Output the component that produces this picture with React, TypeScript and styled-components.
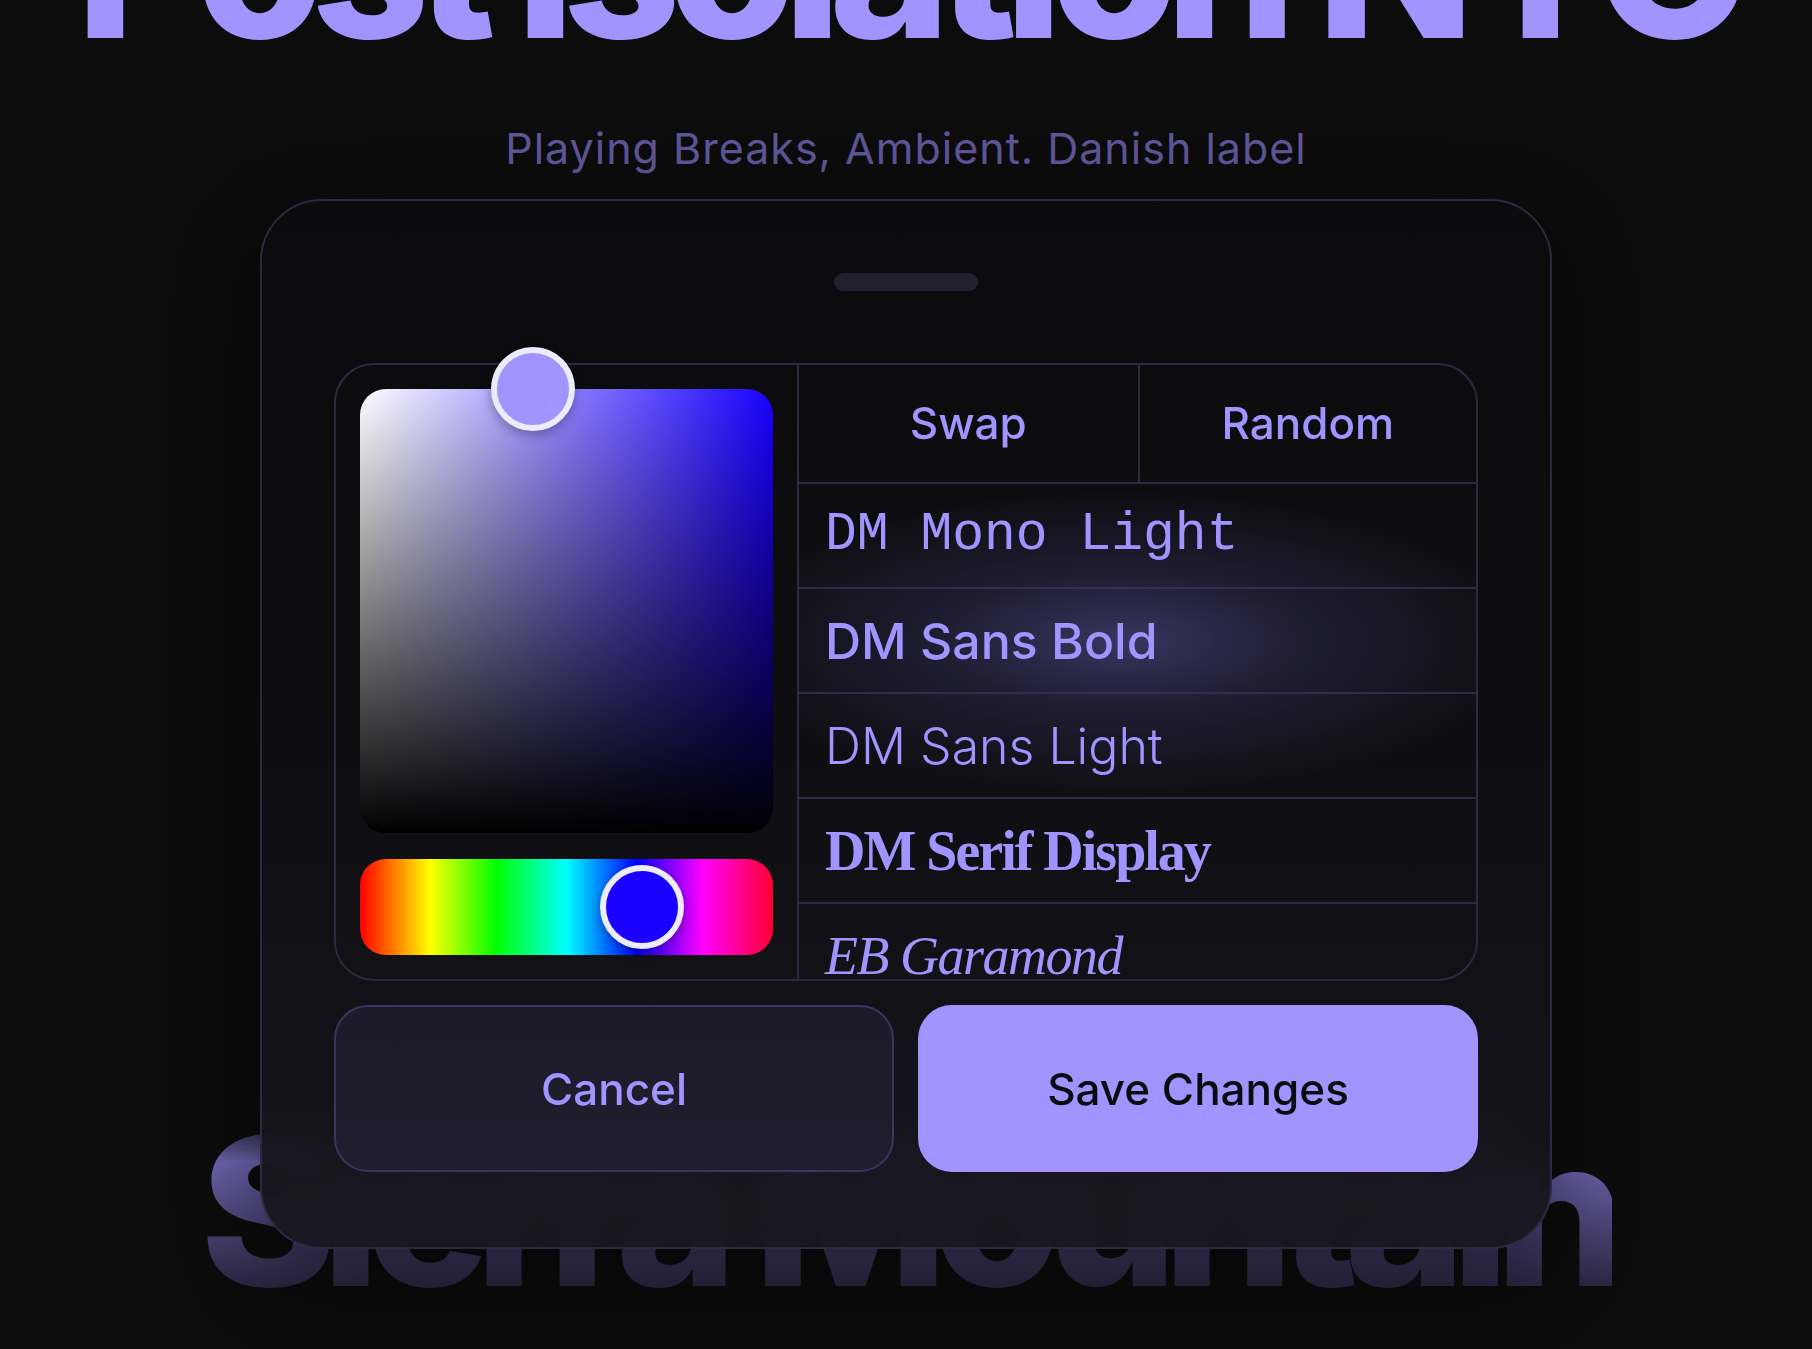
import React, { useState } from "react";
import styled, { createGlobalStyle } from "styled-components";

const colors = {
  page: "#0c0c0c",
  accent: "#a194ff",
  accentDim: "#5c5596",
  line: "#2d2942",
  lineStrong: "#3a3560",
  handle: "#22202e",
  ring: "#ecebff",
};

const sans = `Inter, "Noto Sans", "Liberation Sans", sans-serif`;

const GlobalStyle = createGlobalStyle`
  html, body {
    margin: 0;
    padding: 0;
    background: ${colors.page};
  }
  * {
    box-sizing: border-box;
  }
`;

const fonts = [
  { label: "DM Mono Light", family: `"Liberation Mono", "DejaVu Sans Mono", monospace`, size: 53, weight: 400, italic: false, tracking: 0 },
  { label: "DM Sans Bold", family: sans, size: 50, weight: 500, italic: false, tracking: 0 },
  { label: "DM Sans Light", family: sans, size: 50, weight: 300, italic: false, tracking: 0 },
  { label: "DM Serif Display", family: `"Liberation Serif", "DejaVu Serif", serif`, size: 56, weight: 700, italic: false, tracking: -2 },
  { label: "EB Garamond", family: `"Liberation Serif", "DejaVu Serif", serif`, size: 54, weight: 400, italic: true, tracking: -1.5 },
];

const HUE = 246;

const App: React.FC = () => {
  const [selected, setSelected] = useState<number>(1);
  const [hue] = useState<number>(HUE);

  return (
    <StyledPage>
      <GlobalStyle />
      <Backdrop>
        <BigTitle>Post Isolation NYC</BigTitle>
        <Subtitle>Playing Breaks, Ambient. Danish label</Subtitle>
        <BigTitle $faded>Sierra Mountain</BigTitle>
      </Backdrop>

      <Overlay>
        <Sheet>
          <Handle />
          <Panel>
            <PickerColumn>
              <ColorField style={{ ["--hue" as any]: hue }}>
                <Thumb $fill={colors.accent} style={{ left: "41.9%", top: "0%" }} />
              </ColorField>
              <HueBar>
                <Thumb $fill={`hsl(${hue}, 100%, 50%)`} style={{ left: `${(hue / 360) * 100}%`, top: "50%" }} />
              </HueBar>
            </PickerColumn>

            <FontColumn>
              <ActionRow>
                <ActionButton>Swap</ActionButton>
                <ActionButton>Random</ActionButton>
              </ActionRow>
              <FontList>
                {fonts.map((f, i) => (
                  <FontRow
                    key={f.label}
                    $active={i === selected}
                    onClick={() => setSelected(i)}
                    style={{
                      fontFamily: f.family,
                      fontSize: f.size,
                      fontWeight: f.weight,
                      fontStyle: f.italic ? "italic" : "normal",
                      letterSpacing: f.tracking,
                    }}
                  >
                    <span>{f.label}</span>
                  </FontRow>
                ))}
              </FontList>
            </FontColumn>
          </Panel>

          <Footer>
            <FooterButton>Cancel</FooterButton>
            <FooterButton $primary>Save Changes</FooterButton>
          </Footer>
        </Sheet>
      </Overlay>
    </StyledPage>
  );
};

const StyledPage = styled.div`
  position: relative;
  width: 100%;
  height: 1349px;
  overflow: hidden;
  background: ${colors.page};
  font-family: ${sans};
`;

const Backdrop = styled.div`
  display: flex;
  flex-direction: column;
  align-items: center;
`;

const BigTitle = styled.div<{ $faded?: boolean }>`
  font-family: ${sans};
  font-size: 206px;
  line-height: 206px;
  font-weight: 800;
  letter-spacing: ${(p) => (p.$faded ? "-0.07em" : "-0.06em")};
  white-space: nowrap;
  color: ${colors.accent};
  margin-top: ${(p) => (p.$faded ? "935px" : "-140px")};

  ${(p) =>
    p.$faded &&
    `
    background: linear-gradient(180deg, transparent 0%, #6d64ad 26%, #2b2742 86%);
    -webkit-background-clip: text;
    background-clip: text;
    color: transparent;
  `}
`;

const Subtitle = styled.div`
  margin-top: 57px;
  font-size: 43px;
  line-height: 50px;
  letter-spacing: 1px;
  font-weight: 400;
  color: ${colors.accentDim};
`;

const Overlay = styled.div`
  position: absolute;
  inset: 0;
  display: flex;
  justify-content: center;
  align-items: flex-start;
  padding-top: 199px;
`;

const Sheet = styled.div`
  width: 1292px;
  display: flex;
  flex-direction: column;
  align-items: stretch;
  padding: 72px 72px 75px;
  border: 2px solid ${colors.line};
  border-radius: 62px;
  background: linear-gradient(180deg, rgba(12, 12, 14, 0.96) 0%, rgba(14, 14, 17, 0.95) 45%, rgba(23, 22, 30, 0.93) 100%);
  backdrop-filter: blur(18px);
  box-shadow: 0 30px 80px rgba(0, 0, 0, 0.45);
`;

const Handle = styled.div`
  align-self: center;
  width: 144px;
  height: 18px;
  border-radius: 9px;
  background: ${colors.handle};
  margin-bottom: 72px;
`;

const Panel = styled.div`
  display: grid;
  grid-template-columns: 461px 1fr;
  height: 618px;
  border: 2px solid ${colors.line};
  border-radius: 40px;
`;

const PickerColumn = styled.div`
  display: flex;
  flex-direction: column;
  gap: 26px;
  padding: 24px;
`;

const ColorField = styled.div`
  position: relative;
  height: 444px;
  border-radius: 26px;
  background: linear-gradient(0deg, #000 0%, rgba(0, 0, 0, 0) 100%),
    linear-gradient(90deg, #fff 0%, hsl(var(--hue), 100%, 50%) 100%);
`;

const HueBar = styled.div`
  position: relative;
  height: 96px;
  border-radius: 26px;
  background: linear-gradient(
    90deg,
    #ff0000 0%,
    #ffff00 17%,
    #00ff00 33%,
    #00ffff 50%,
    #0000ff 67%,
    #ff00ff 83%,
    #ff0030 100%
  );
`;

const Thumb = styled.div<{ $fill: string }>`
  position: absolute;
  width: 84px;
  height: 84px;
  border-radius: 50%;
  transform: translate(-50%, -50%);
  background: ${(p) => p.$fill};
  border: 6px solid ${colors.ring};
  box-shadow: 0 4px 12px rgba(0, 0, 0, 0.3);
`;

const FontColumn = styled.div`
  display: flex;
  flex-direction: column;
  border-left: 2px solid ${colors.line};
  border-radius: 0 38px 38px 0;
  overflow: hidden;
  min-width: 0;
`;

const ActionRow = styled.div`
  display: grid;
  grid-template-columns: 1fr 1fr;
  height: 119px;
  flex-shrink: 0;
  border-bottom: 2px solid ${colors.line};
`;

const ActionButton = styled.button`
  display: flex;
  align-items: center;
  justify-content: center;
  background: transparent;
  border: none;
  padding: 0 0 2px;
  font-family: ${sans};
  font-size: 44px;
  font-weight: 500;
  color: ${colors.accent};
  cursor: pointer;

  & + & {
    border-left: 2px solid ${colors.line};
  }
`;

const FontList = styled.div`
  flex: 1;
  overflow: hidden;
  position: relative;
`;

const FontRow = styled.div<{ $active?: boolean }>`
  position: relative;
  height: 105px;
  display: flex;
  align-items: center;
  padding: 0 0 0 26px;
  border-bottom: 2px solid ${colors.line};
  color: ${colors.accent};
  line-height: 1;
  white-space: nowrap;
  cursor: pointer;

  span {
    position: relative;
    z-index: 1;
  }

  ${(p) =>
    p.$active &&
    `
    &::before {
      content: "";
      position: absolute;
      left: -60px;
      right: -60px;
      top: -140px;
      bottom: -140px;
      background: radial-gradient(ellipse 52% 40% at 48% 50%, rgba(74, 68, 126, 0.72) 0%, rgba(58, 52, 100, 0.42) 42%, rgba(20, 20, 30, 0) 100%);
      pointer-events: none;
    }
  `}
`;

const Footer = styled.div`
  display: grid;
  grid-template-columns: 1fr 1fr;
  gap: 24px;
  margin-top: 24px;
`;

const FooterButton = styled.button<{ $primary?: boolean }>`
  height: 167px;
  border-radius: 34px;
  font-family: ${sans};
  font-size: 44px;
  font-weight: 500;
  cursor: pointer;
  border: 2px solid ${(p) => (p.$primary ? "#a194ff" : colors.lineStrong)};
  background: ${(p) => (p.$primary ? "#a194ff" : "linear-gradient(180deg, #1d1b29 0%, #201d2e 100%)")};
  color: ${(p) => (p.$primary ? "#0b0b10" : colors.accent)};
`;

export default App;
